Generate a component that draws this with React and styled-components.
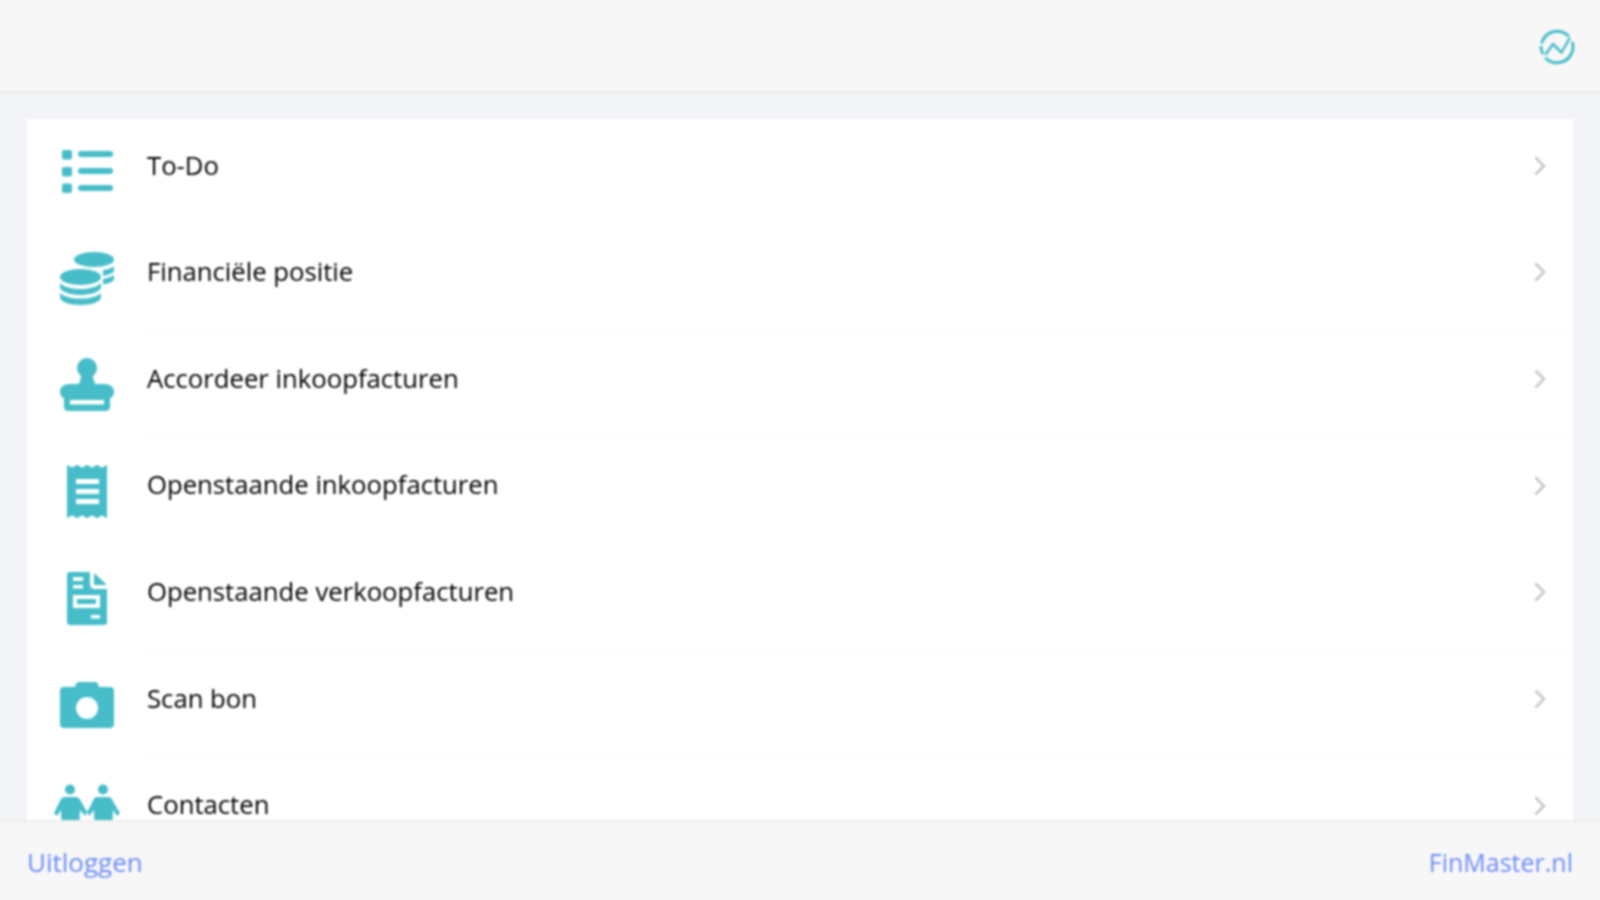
import React from "react";
import styled, { createGlobalStyle } from "styled-components";

const teal = "#47bdc9";

const GlobalStyle = createGlobalStyle`
  html, body {
    margin: 0;
    padding: 0;
    background: #f2f4f7;
  }
`;

const Page = styled.div`
  height: 100vh;
  display: flex;
  flex-direction: column;
  overflow: hidden;
  font-family: "Open Sans", "Noto Sans", sans-serif;
  filter: blur(0.8px);
`;

const Header = styled.header`
  flex: 0 0 93px;
  box-sizing: border-box;
  display: flex;
  align-items: center;
  justify-content: flex-end;
  padding: 3px 25px 0 0;
  background: #f7f7f7;
  border-bottom: 2px solid #e8e9ea;
`;

const Main = styled.main`
  flex: 1;
  min-height: 0;
  overflow: hidden;
  padding: 26px 27px 0;
`;

const Card = styled.ul`
  margin: 0;
  padding: 0;
  list-style: none;
  background: #fff;
`;

const Row = styled.li`
  height: 106.67px;
  box-sizing: border-box;
  display: flex;
  align-items: center;
  gap: 27px;
  padding: 0 26px 0 27px;

  &:first-child {
    height: 105.67px;
  }
`;

const RowBody = styled.div`
  flex: 1;
  align-self: stretch;
  display: flex;
  align-items: center;
  justify-content: space-between;
  padding-bottom: 11px;
  margin-right: -26px;
  padding-right: 26px;
  border-bottom: 1px solid ${(p) => (p.$divider ? "#f8f8f8" : "transparent")};
`;

const Label = styled.span`
  font-size: 25.7px;
  line-height: 1;
  color: #000;
`;

const Footer = styled.footer`
  flex: 0 0 80px;
  box-sizing: border-box;
  display: flex;
  align-items: center;
  justify-content: space-between;
  padding: 2px 27px 0;
  background: #f7f7f7;
  border-top: 2px solid #eeeeee;
`;

const FooterLink = styled.a`
  font-size: ${(p) => p.$size}px;
  color: #6d8cf7;
  text-decoration: none;
`;

const Icon = ({ children }) => (
  <svg width="66" height="54" viewBox="0 0 66 54" fill={teal} style={{ flex: "none" }}>
    {children}
  </svg>
);

const ListIcon = () => (
  <Icon>
    <rect x="8" y="5" width="10" height="9.5" rx="2" />
    <rect x="8" y="22" width="10" height="9.5" rx="2" />
    <rect x="8" y="38.5" width="10" height="9.5" rx="2" />
    <rect x="24" y="6" width="35" height="6" rx="3" />
    <rect x="24" y="23" width="35" height="6" rx="3" />
    <rect x="24" y="40" width="35" height="6" rx="3" />
  </Icon>
);

const CoinsIcon = () => (
  <Icon>
    <ellipse cx="40" cy="8.5" rx="20" ry="7.5" />
    <path d="M49 19c5-.6 9-2 11-3.500v4c0 2-4 4-11 5.500zM49 28c5-.8 9-2.200 11-4v4c0 2-4 4.500-11 5.500z" />
    <ellipse cx="26.500" cy="26" rx="20.500" ry="8" />
    <path d="M6 32c3 3.500 11 6 20.500 6S44 35.500 47 32v4c0 4-9 8-20.500 8S6 40 6 36z" />
    <path d="M6 42c3 3.500 11 5.500 20.500 5.500S44 45.500 47 42v4c0 4.500-9 8-20.500 8S6 50.500 6 46z" />
  </Icon>
);

const StampIcon = () => (
  <Icon>
    <circle cx="33" cy="10" r="10" />
    <path d="M27 16h12c0 5 1 8 3 11H24c2-3 3-6 3-11z" />
    <path d="M16 26h34c6 0 10 3 10 7.500S57 40 56 40v9c0 2-2 4-4 4H14c-2 0-4-2-4-4v-9c-1 0-4-2-4-6.500S10 26 16 26z" />
    <rect x="16" y="42" width="34" height="4.500" fill="#fff" />
  </Icon>
);

const ReceiptIcon = () => (
  <Icon>
    <path d="M13 1c2 0 3 2.500 5 2.500S21 1 23 1s3 2.500 5 2.500S31 1 33 1s3 2.500 5 2.500S41 1 43 1s3 2.500 5 2.500S51 1 53 1v53c-2 0-3-2.500-5-2.500S45 54 43 54s-3-2.500-5-2.500S35 54 33 54s-3-2.500-5-2.500S25 54 23 54s-3-2.500-5-2.500S15 54 13 54z" />
    <rect x="22" y="15" width="23" height="5" fill="#fff" />
    <rect x="22" y="25" width="23" height="5" fill="#fff" />
    <rect x="22" y="35" width="23" height="5" fill="#fff" />
  </Icon>
);

const DocIcon = () => (
  <Icon>
    <path d="M16 1h20v12c0 3 2 5 5 5h12v33c0 2-1 3-3 3H16c-2 0-3-1-3-3V4c0-2 1-3 3-3z" />
    <path d="M40 2l13 12H40z" />
    <rect x="19" y="6" width="10" height="4" fill="#fff" />
    <rect x="19" y="14" width="10" height="3.500" fill="#fff" />
    <path d="M19 24h27v13H19zm4 4v5h19v-5z" fill="#fff" fillRule="evenodd" />
    <rect x="37" y="44" width="9" height="3.500" fill="#fff" />
  </Icon>
);

const CameraIcon = () => (
  <Icon>
    <path d="M25 4h16c2 0 3 1 4 5h11c2.500 0 4 1.500 4 4v33c0 2.500-1.500 4-4 4H10c-2.500 0-4-1.500-4-4V13c0-2.500 1.500-4 4-4h11c1-4 2-5 4-5z" />
    <circle cx="33" cy="30" r="11" fill="#fff" />
  </Icon>
);

const PeopleIcon = () => (
  <Icon>
    <circle cx="16" cy="5.500" r="5" />
    <circle cx="49" cy="5.500" r="5" />
    <path d="M10 13h12c3 0 5 4 7 8l4 7-2 4-5-6-1 28H8l-1-28-4 6-3-3 5-10c1.500-3 3-6 5-6z" />
    <path d="M43 13h12c2 0 3.500 3 5 6l6 10-3 3-4-6-1 28H41l-1-28-5 6-2-4 4-7c2-4 3-8 6-8z" />
  </Icon>
);

const Logo = () => (
  <svg width="36" height="36" viewBox="0 0 36 36" fill="none" stroke={teal} strokeWidth="3" strokeLinecap="round" strokeLinejoin="round">
    <path d="M29 6.500A16 16 0 0 0 3 13" />
    <path d="M2 18a16 16 0 0 0 1.500 6" />
    <path d="M7 29.500A16 16 0 0 0 33.500 14" />
    <path d="M7 25l7-10 8.500 8.500 8-14" strokeWidth="2.500" />
  </svg>
);

const Chevron = () => (
  <svg width="12" height="20" viewBox="0 0 12 20" fill="none" stroke="#c6c6c6" strokeWidth="2.500" style={{ flex: "none", margin: "1px 1px 0 0" }}>
    <path d="M1.500 1.500L10 10l-8.500 8.500" />
  </svg>
);

const items = [
  { label: "To-Do", icon: ListIcon },
  { label: "Financiële positie", icon: CoinsIcon, divider: true },
  { label: "Accordeer inkoopfacturen", icon: StampIcon, divider: true },
  { label: "Openstaande inkoopfacturen", icon: ReceiptIcon },
  { label: "Openstaande verkoopfacturen", icon: DocIcon, divider: true },
  { label: "Scan bon", icon: CameraIcon, divider: true },
  { label: "Contacten", icon: PeopleIcon },
];

const App = () => {
  return (
    <Page>
      <GlobalStyle />
      <Header>
        <Logo />
      </Header>
      <Main>
        <Card>
          {items.map(({ label, icon: ItemIcon, divider }) => (
            <Row key={label}>
              <ItemIcon />
              <RowBody $divider={divider}>
                <Label>{label}</Label>
                <Chevron />
              </RowBody>
            </Row>
          ))}
        </Card>
      </Main>
      <Footer>
        <FooterLink href="#" $size={26}>Uitloggen</FooterLink>
        <FooterLink href="#" $size={25}>FinMaster.nl</FooterLink>
      </Footer>
    </Page>
  );
};

export default App;
